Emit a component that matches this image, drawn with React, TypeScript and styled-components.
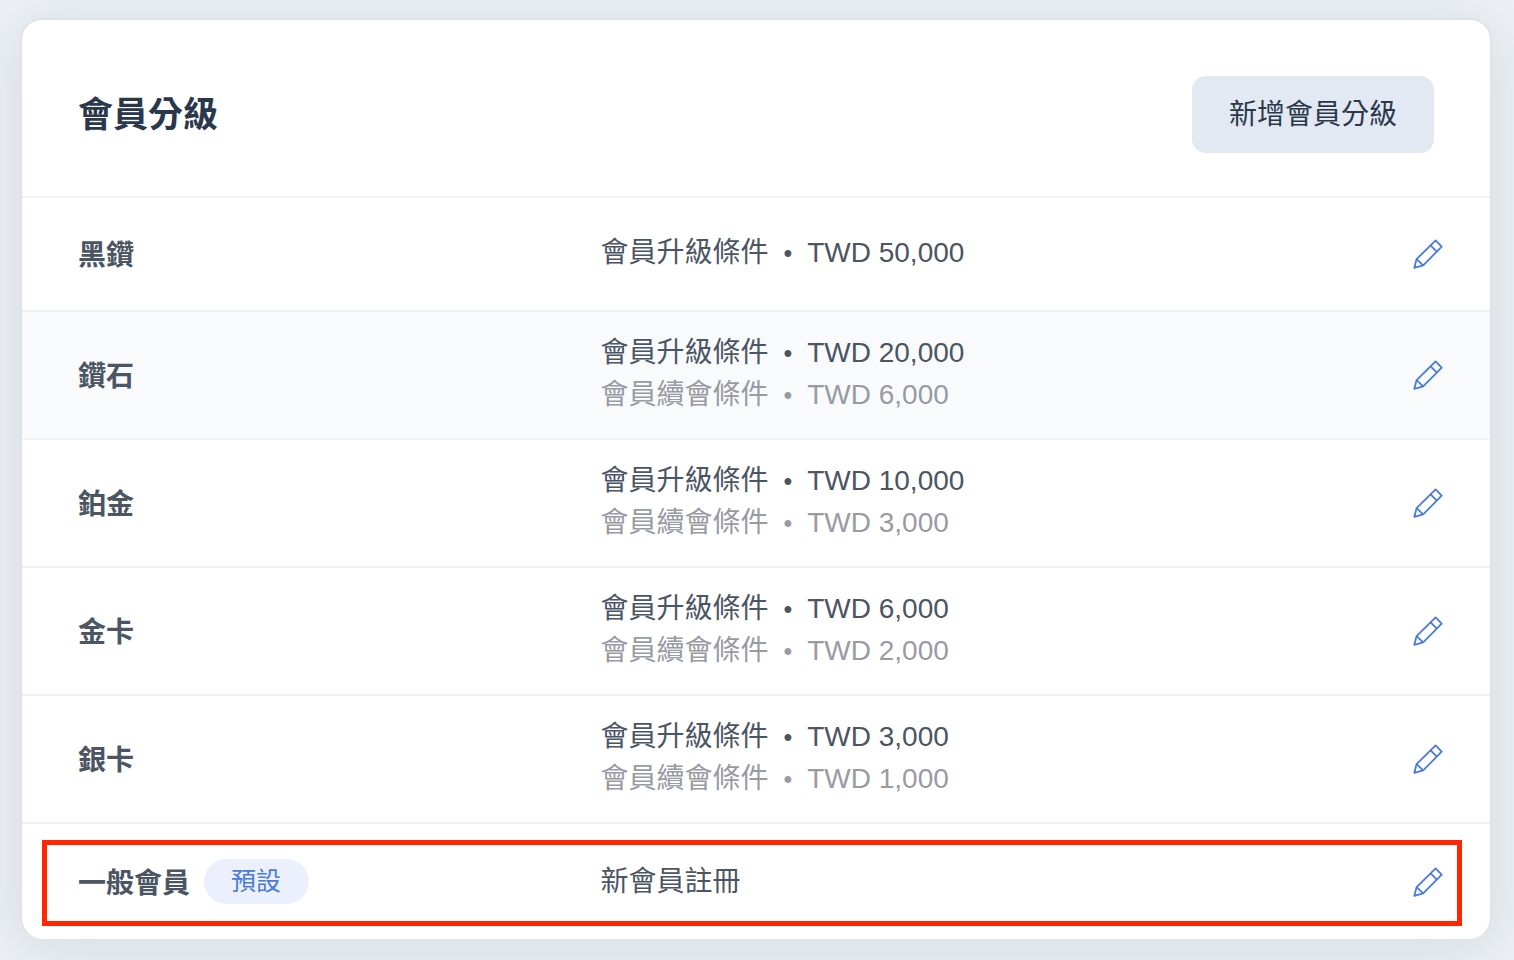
import React from 'react';
import styled, { createGlobalStyle } from 'styled-components';

const GlobalStyle = createGlobalStyle`
  * {
    box-sizing: border-box;
  }

  body {
    margin: 0;
    background: #edf1f6;
    color: #4b5563;
    font-family: 'Liberation Sans', 'Noto Sans CJK TC', sans-serif;
    font-size: 28px;
    line-height: 42px;
  }
`;

const Page = styled.main`
  padding: 18px 22px 21px 20px;
`;

const Card = styled.section`
  border: 2px solid #dfe3e9;
  border-bottom: 0;
  border-radius: 22px;
  background: #fff;
  box-shadow: 0 8px 60px rgba(60, 80, 80, 0.14);
`;

const CardHeader = styled.header`
  display: flex;
  align-items: center;
  justify-content: space-between;
  padding: 56px 56px 43px;
`;

const Title = styled.h1`
  margin: 0;
  color: #2b384c;
  font-size: 35px;
  font-weight: 700;
  line-height: 52px;
`;

const AddButton = styled.button`
  padding: 18px 37px 17px;
  border: 0;
  border-radius: 14px;
  background: #e2e9f2;
  color: #2b384c;
  font: inherit;
`;

const TierTable = styled.table`
  width: 100%;
  border-collapse: separate;
  border-spacing: 0;
  table-layout: fixed;
`;

const TierRow = styled.tr<{ $striped: boolean }>`
  background: ${({ $striped }) => ($striped ? '#f9fafc' : 'transparent')};

  &:last-child > * {
    height: 117px;
  }
`;

const cellBase = `
  height: 114px;
  border-top: 2px solid #f0f1f2;
  vertical-align: middle;
`;

const NameCell = styled.th`
  ${cellBase}
  width: 39.4%;
  padding: 20px 0 20px 56px;
  font-weight: 700;
  text-align: left;
`;

const NameGroup = styled.div`
  display: flex;
  align-items: center;
  gap: 14px;
`;

const Name = styled.span`
  padding-top: 4px;
`;

const DetailCell = styled.td`
  ${cellBase}
  padding: 20px 0 22px;
`;

const ActionCell = styled.td`
  ${cellBase}
  width: 120px;
  padding: 0 40px 0 0;
  text-align: right;
`;

const Condition = styled.div<{ $muted?: boolean }>`
  color: ${({ $muted }) => ($muted ? '#989ba3' : 'inherit')};
`;

const Note = styled.div`
  padding-top: 3px;
`;

const Separator = styled.span`
  padding: 0 15px;
  font-size: 25px;
  line-height: 1;
`;

const Badge = styled.span`
  padding: 0 28px 0 27px;
  border-radius: 23px;
  background: #ebf0fc;
  color: #4a7bd8;
  font-size: 25px;
  font-weight: 400;
  line-height: 45px;
`;

const EditButton = styled.button`
  display: inline-flex;
  align-items: center;
  justify-content: center;
  width: 44px;
  height: 44px;
  padding: 0;
  border: 0;
  background: transparent;
  color: #4a7bd8;
  vertical-align: middle;
`;

const TableArea = styled.div`
  position: relative;
`;

const Highlight = styled.div`
  position: absolute;
  right: 28px;
  bottom: 13px;
  left: 20px;
  height: 86px;
  border: 5px solid #ff2600;
  pointer-events: none;
`;

type Tier = {
  name: string;
  upgrade?: string;
  renewal?: string;
  note?: string;
  isDefault?: boolean;
};

const tiers: Tier[] = [
  { name: '黑鑽', upgrade: 'TWD 50,000' },
  { name: '鑽石', upgrade: 'TWD 20,000', renewal: 'TWD 6,000' },
  { name: '鉑金', upgrade: 'TWD 10,000', renewal: 'TWD 3,000' },
  { name: '金卡', upgrade: 'TWD 6,000', renewal: 'TWD 2,000' },
  { name: '銀卡', upgrade: 'TWD 3,000', renewal: 'TWD 1,000' },
  { name: '一般會員', note: '新會員註冊', isDefault: true },
];

function PencilIcon() {
  return (
    <svg
      width="32"
      height="32"
      viewBox="0 0 32 32"
      fill="none"
      stroke="currentColor"
      strokeWidth="1.8"
      strokeLinejoin="round"
      aria-hidden="true"
    >
      <path d="M2.3 29.8 4.6 21.1 23.6 2.4 29.7 8.6 11.2 27.4Z" />
      <path d="M18.6 7.4 24.8 13.6M4.6 21.1 11.2 27.4" />
    </svg>
  );
}

export default function App() {
  return (
    <>
      <GlobalStyle />
      <Page>
        <Card>
          <CardHeader>
            <Title>會員分級</Title>
            <AddButton type="button">新增會員分級</AddButton>
          </CardHeader>
          <TableArea>
            <TierTable>
              <tbody>
                {tiers.map((tier, index) => (
                  <TierRow key={tier.name} $striped={index === 1}>
                    <NameCell scope="row">
                      <NameGroup>
                        <Name>{tier.name}</Name>
                        {tier.isDefault && <Badge>預設</Badge>}
                      </NameGroup>
                    </NameCell>
                    <DetailCell>
                      {tier.upgrade && (
                        <Condition>
                          會員升級條件<Separator>•</Separator>
                          {tier.upgrade}
                        </Condition>
                      )}
                      {tier.renewal && (
                        <Condition $muted>
                          會員續會條件<Separator>•</Separator>
                          {tier.renewal}
                        </Condition>
                      )}
                      {tier.note && <Note>{tier.note}</Note>}
                    </DetailCell>
                    <ActionCell>
                      <EditButton type="button" aria-label={`編輯${tier.name}`}>
                        <PencilIcon />
                      </EditButton>
                    </ActionCell>
                  </TierRow>
                ))}
              </tbody>
            </TierTable>
            <Highlight />
          </TableArea>
        </Card>
      </Page>
    </>
  );
}
